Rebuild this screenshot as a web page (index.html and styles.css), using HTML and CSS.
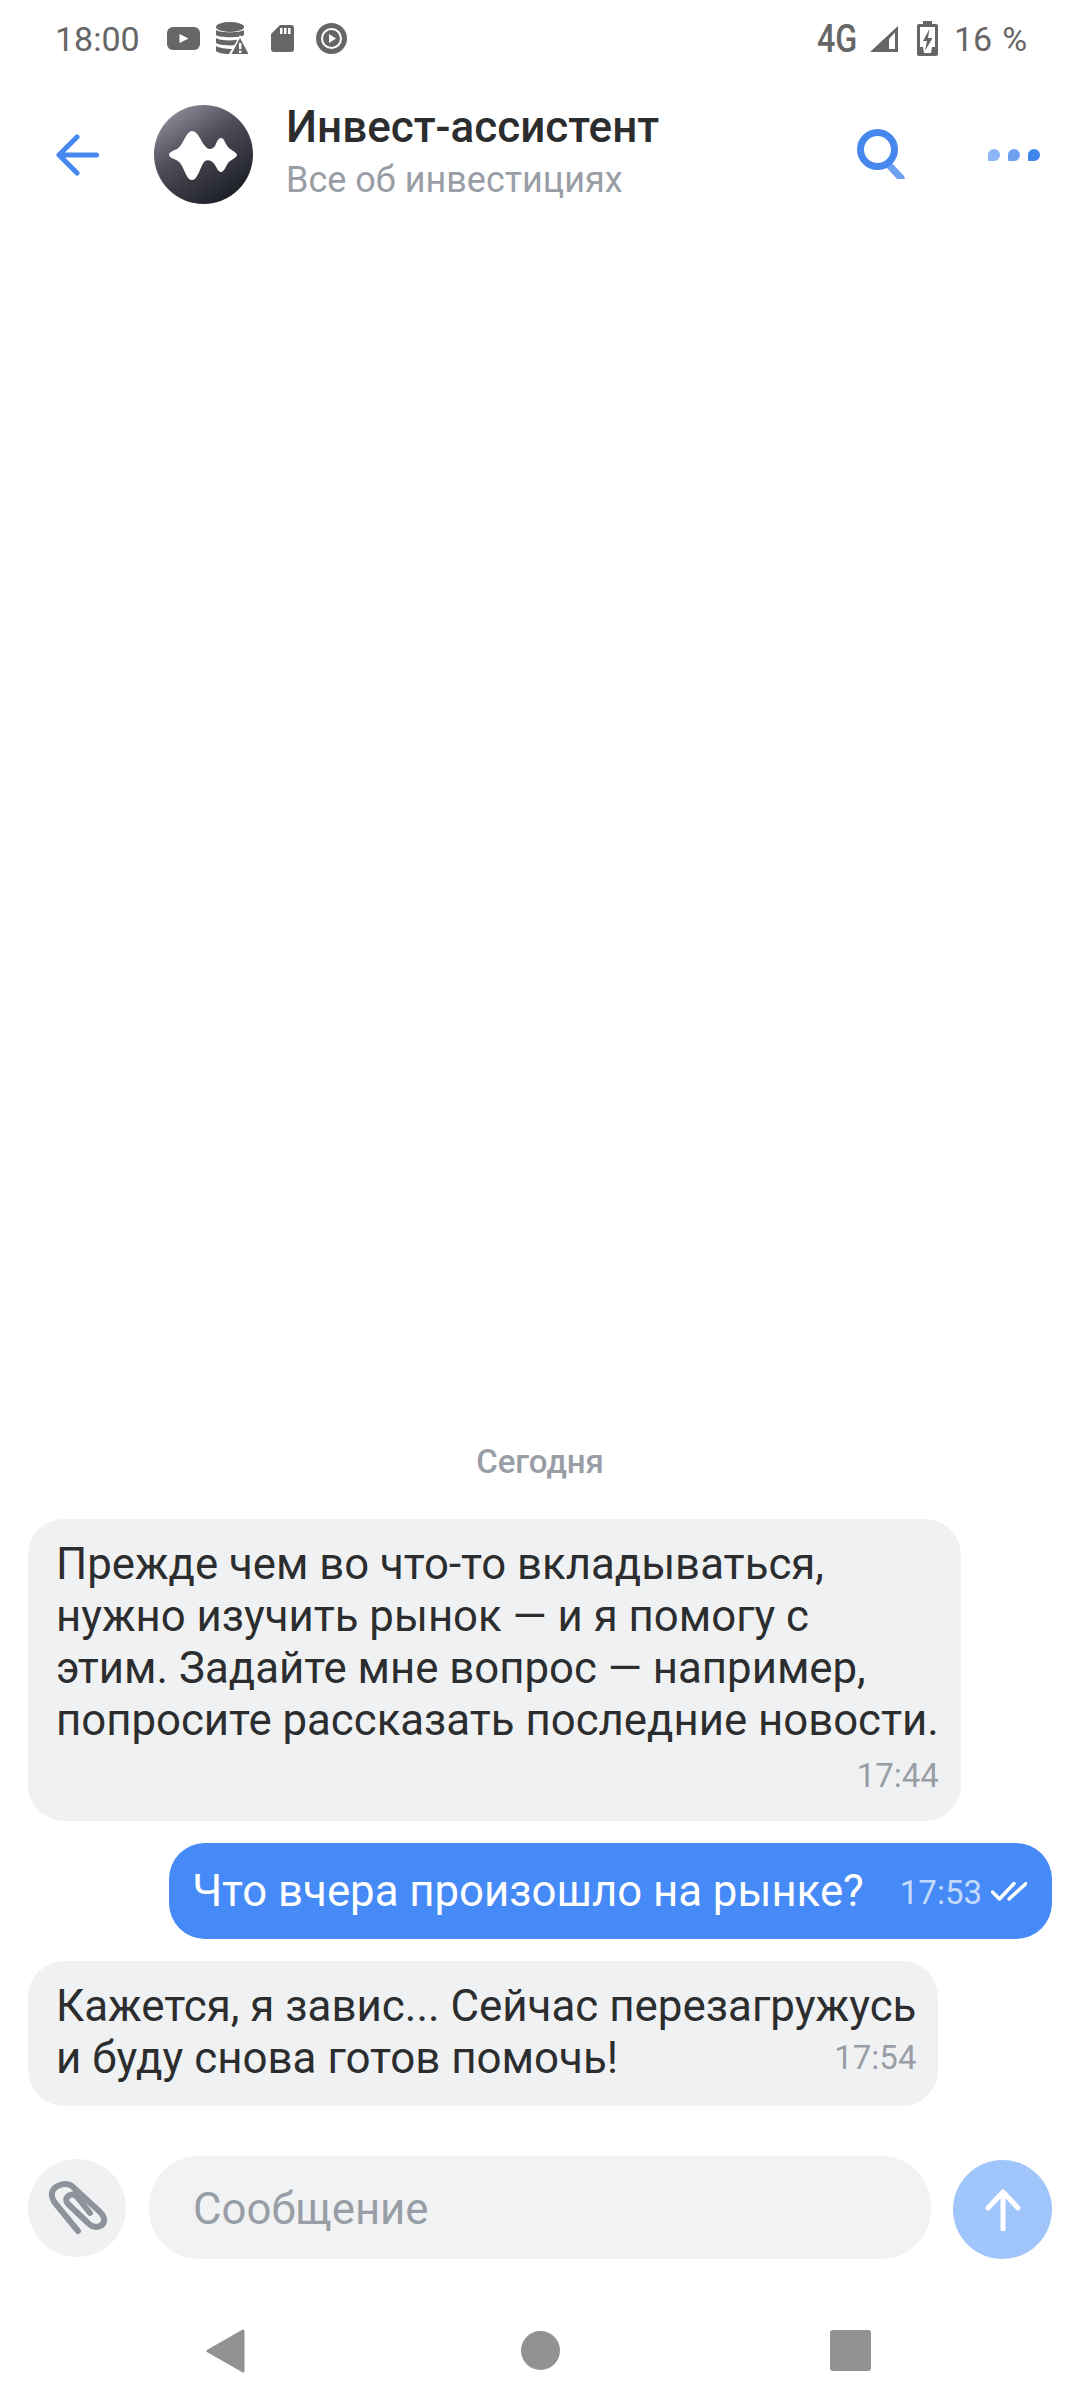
FILE: index.html
```html
<!DOCTYPE html>
<html lang="ru">

<head>
    <meta charset="utf-8">
    <title>Инвест-ассистент</title>
    <link rel="stylesheet" href="styles.css">
</head>

<body>
    <div class="screen">
        <div class="status">
            <span class="status-time">18:00</span>
            <svg class="ic-yt" viewBox="0 0 33 23">
                <rect width="33" height="23" rx="6" fill="#666"/>
                <path d="M12.5 7l9 4.500-9 4.500z" fill="#fff"/>
            </svg>
            <svg class="ic-db" viewBox="0 0 34 33">
                <ellipse cx="14" cy="5" rx="14" ry="5" fill="#666"/>
                <path d="M0 8c3 3 25 3 28 0v5c-3 3-25 3-28 0zM0 16c3 3 20 3 24 1l-4 6c-8 1-17 0-20-2zM0 24c3 2 10 3 16 3l-3 5c-6 0-11-1-13-3z" fill="#666"/>
                <path d="M24 13l11 20H13z" fill="#fff"/>
                <path d="M24 16l8.500 16h-17z" fill="#666"/>
                <path d="M23 21h2.400v6H23zM23 28.500h2.400V31H23z" fill="#fff"/>
            </svg>
            <svg class="ic-sd" viewBox="0 0 23 27">
                <path d="M9 0h11a3 3 0 0 1 3 3v21a3 3 0 0 1-3 3H3a3 3 0 0 1-3-3V9z" fill="#666"/>
                <path d="M9 3h2.500v6H9zM13 3h2.500v6H13zM17 3h2.500v6H17z" fill="#fff"/>
            </svg>
            <svg class="ic-play" viewBox="0 0 31 31">
                <circle cx="15.500" cy="15.500" r="15.500" fill="#666"/>
                <circle cx="15.500" cy="15.500" r="9.500" fill="none" stroke="#fff" stroke-width="2"/>
                <path d="M13 11l7 4.500-7 4.500z" fill="#fff"/>
            </svg>

            <span class="status-net">4G</span>
            <svg class="ic-signal" viewBox="0 0 28 26">
                <path d="M28 0v26H0z" fill="#666"/>
                <path d="M19 13l6-6.500V23h-6z" fill="#fff"/>
            </svg>
            <svg class="ic-batt" viewBox="0 0 21 35">
                <path d="M6 0h9v3h4a2 2 0 0 1 2 2v28a2 2 0 0 1-2 2H2a2 2 0 0 1-2-2V5a2 2 0 0 1 2-2h4z" fill="#666"/>
                <rect x="3" y="6" width="15" height="26" fill="#fff"/>
                <path d="M12.500 8L6 20h4l-2 10 7.500-13h-4.500z" fill="#666"/>
                <path d="M3 26h3l1 6H3zM15 26h3v6h-4z" fill="#666"/>
            </svg>
            <span class="status-batt">16 %</span>
        </div>

        <header class="header">
            <svg class="ic-back" viewBox="0 0 43 42">
                <path d="M40.500 21H4M21 3L3 21l18 18" fill="none" stroke="#4587ee" stroke-width="5" stroke-linecap="round" stroke-linejoin="round"/>
            </svg>
            <svg class="avatar" viewBox="14 15 99 99">
                <defs>
                    <linearGradient id="avagrad" x1="0.2" y1="0.05" x2="0.8" y2="0.95">
                        <stop offset="0" stop-color="#8a8996"/>
                        <stop offset="0.4" stop-color="#4d4d58"/>
                        <stop offset="1" stop-color="#1b1d25"/>
                    </linearGradient>
                </defs>
                <circle cx="63.500" cy="64.500" r="49.500" fill="url(#avagrad)"/>
                <path d="M29 65C29 62 33 61 37 59C43 56 46 41 52 41C58 41 60 50 65 56C68 60 72 60 75 56C77 52 78 48 81 48C84 48 85 53 88 57C90 60 97 62 97 65C97 68 90 70 88 73C86 76 84 82 81 82C78 82 77 78 75 75C72 70 67 69 64 72C60 77 58 90 52 90C46 90 44 76 39 72C36 69 29 68 29 65Z" fill="#fff"/>
            </svg>
            <div class="peer">
                <div class="peer-name">Инвест-ассистент</div>
                <div class="peer-sub">Все об инвестициях</div>
            </div>
            <svg class="ic-search" viewBox="0 0 48 50">
                <path d="M31 35l13 14" fill="none" stroke="#6ea1f0" stroke-width="7" stroke-linecap="round"/>
                <circle cx="20.500" cy="20.500" r="17" fill="none" stroke="#4587ee" stroke-width="7"/>
            </svg>
            <div class="dots">
                <span class="dot dot-1"></span>
                <span class="dot dot-2"></span>
                <span class="dot dot-3"></span>
            </div>
        </header>

        <main class="chat">
            <div class="date">Сегодня</div>
            <div class="msg msg-in msg-long">
                <div>Прежде чем во что-то вкладываться,<br>нужно изучить рынок — и я помогу с<br>этим. Задайте мне вопрос — например,<br>попросите рассказать последние новости.</div>
                <div class="msg-foot"><span class="time">17:44</span></div>
            </div>
            <div class="msg msg-out">
                <span>Что вчера произошло на рынке?</span>
                <span class="time time-out">17:53</span>
                <svg class="ic-read" viewBox="0 0 36 22">
                    <path d="M1.500 11l7 7L23 2.500M18 18L35 2.500" fill="none" stroke="#fff" stroke-width="3.500" stroke-linecap="round" stroke-linejoin="round"/>
                </svg>
            </div>
            <div class="msg msg-in msg-short">
                <div>Кажется, я завис... Сейчас перезагружусь</div>
                <div class="msg-last">
                    <span>и буду снова готов помочь!</span>
                    <span class="time">17:54</span>
                </div>
            </div>
        </main>

        <div class="composer">
            <div class="attach">
                <svg viewBox="0 0 80 75">
                    <path d="M38 61L15 33C9 24 12 18 20 15C26 13 31 14 35 19L60 42C66 48 65 54 60 56C56 58 52 57 48 53L28 34C25 30 26 27 30 25C33 24 36 25 38 28L50 43" fill="none" stroke="#8e939b" stroke-width="6" stroke-linecap="round"/>
                </svg>
            </div>
            <div class="input">Сообщение</div>
            <div class="send">
                <svg viewBox="0 0 36 42">
                    <path d="M18 40V3M3 19L18 3l15 16" fill="none" stroke="#fff" stroke-width="5" stroke-linecap="round" stroke-linejoin="round"/>
                </svg>
            </div>
        </div>

        <nav class="nav">
            <svg class="nav-back" viewBox="0 0 39 44">
                <path d="M37 2v40L2 22z" fill="#929292" stroke="#929292" stroke-width="3" stroke-linejoin="round"/>
            </svg>
            <span class="nav-home"></span>
            <span class="nav-recent"></span>
        </nav>
    </div>
</body>

</html>
```

FILE: styles.css
```css
* {
    box-sizing: border-box;
}

body {
    margin: 0;
    background-color: #fff;
    font-family: Roboto, "Noto Sans", sans-serif;
}

.screen {
    display: flex;
    flex-direction: column;
    width: 1080px;
    height: 2408px;
    overflow: hidden;
}

.status {
    display: flex;
    align-items: center;
    flex: none;
    height: 77px;
    padding-left: 55px;
    color: #666;
    font-size: 34px;
}

.status-time {
    width: 112px;
}

.status svg {
    flex: none;
}

.ic-yt {
    width: 33px;
    height: 23px;
}

.ic-db {
    width: 34px;
    height: 33px;
    margin-left: 16px;
}

.ic-sd {
    width: 23px;
    height: 27px;
    margin-left: 21px;
}

.ic-play {
    width: 31px;
    height: 31px;
    margin-left: 22px;
}

.status-net {
    width: 40px;
    margin-left: 470px;
    font-weight: 500;
    font-size: 38px;
    transform: scaleX(0.85);
    transform-origin: left center;
}

.ic-signal {
    width: 28px;
    height: 26px;
    margin-left: 13px;
}

.ic-batt {
    width: 21px;
    height: 35px;
    margin-left: 19px;
}

.status-batt {
    margin-left: 16px;
    word-spacing: 1.5px;
}

.header {
    display: flex;
    align-items: center;
    flex: none;
    height: 155px;
    padding-left: 56px;
}

.ic-back {
    flex: none;
    width: 43px;
    height: 42px;
}

.avatar {
    flex: none;
    width: 99px;
    height: 99px;
    margin-left: 55px;
}

.peer {
    margin-left: 33px;
    width: 571px;
}

.peer-name {
    margin-bottom: 6px;
    color: #2c2d2e;
    font-weight: 500;
    font-size: 44px;
    line-height: 44px;
}

.peer-sub {
    color: #999ea6;
    font-size: 36px;
    line-height: 50px;
}

.ic-search {
    flex: none;
    width: 48px;
    height: 50px;
    margin-bottom: 2px;
}

.dots {
    display: flex;
    gap: 8px;
    margin-left: 83px;
}

.dot {
    width: 12px;
    height: 12px;
    border-radius: 6px 6px 6px 1px;
}

.dot-1 {
    background-color: #8db4f4;
}

.dot-2 {
    background-color: #6ea1f0;
}

.dot-3 {
    background-color: #3f86ec;
}

.chat {
    display: flex;
    flex: 1;
    flex-direction: column;
    justify-content: flex-end;
    gap: 22px;
    padding: 0 28px 50px;
    font-size: 43.75px;
    line-height: 52px;
    white-space: nowrap;
}

.date {
    margin-bottom: 15px;
    color: #999ea6;
    font-weight: 500;
    font-size: 33px;
    line-height: 40px;
    text-align: center;
}

.msg {
    width: fit-content;
    border-radius: 36px;
}

.msg-in {
    padding: 19px 22px 25px 28px;
    background-color: #f0f1f3;
    color: #2c2d2e;
}

.msg-short {
    padding-bottom: 22px;
    font-size: 43.9px;
}

.msg-out {
    display: flex;
    align-items: center;
    align-self: flex-end;
    height: 96px;
    padding: 0 25px 0 23px;
    background-color: #468af7;
    color: #fff;
}

.msg-foot {
    display: flex;
    justify-content: flex-end;
    margin-top: 10px;
}

.msg-last {
    display: flex;
    justify-content: space-between;
}

.time {
    color: #999ea6;
    font-size: 33px;
    line-height: 40px;
}

.msg-last .time {
    line-height: 52px;
}

.time-out {
    margin-left: 36px;
    margin-top: 4px;
    color: #c4dafc;
}

.ic-read {
    flex: none;
    width: 36px;
    height: 22px;
    margin-left: 9px;
    margin-top: 2px;
}

.composer {
    display: flex;
    align-items: center;
    flex: none;
    height: 103px;
    padding: 0 28px;
}

.attach {
    display: flex;
    align-items: center;
    justify-content: center;
    flex: none;
    width: 98px;
    height: 98px;
    border-radius: 50%;
    background-color: #f0f1f3;
}

.attach svg {
    flex: none;
    width: 80px;
    height: 75px;
    margin-left: 6px;
}

.input {
    flex: none;
    width: 782px;
    height: 103px;
    margin-left: 23px;
    padding-left: 44px;
    border-radius: 50px;
    background-color: #f0f2f3;
    color: #999ea6;
    font-size: 43.75px;
    line-height: 107px;
}

.send {
    display: flex;
    align-items: center;
    justify-content: center;
    flex: none;
    width: 99px;
    height: 99px;
    margin-left: 22px;
    margin-top: 4px;
    border-radius: 50%;
    background-color: #a0c5fb;
}

.send svg {
    width: 36px;
    height: 42px;
}

.nav {
    display: flex;
    align-items: center;
    flex: none;
    height: 149px;
    padding: 34px 0 0 206px;
}

.nav-back {
    flex: none;
    width: 39px;
    height: 44px;
}

.nav-home {
    width: 39px;
    height: 39px;
    margin-left: 276px;
    border-radius: 50%;
    background-color: #929292;
}

.nav-recent {
    width: 41px;
    height: 41px;
    margin-left: 270px;
    border-radius: 3px;
    background-color: #929292;
}
```
